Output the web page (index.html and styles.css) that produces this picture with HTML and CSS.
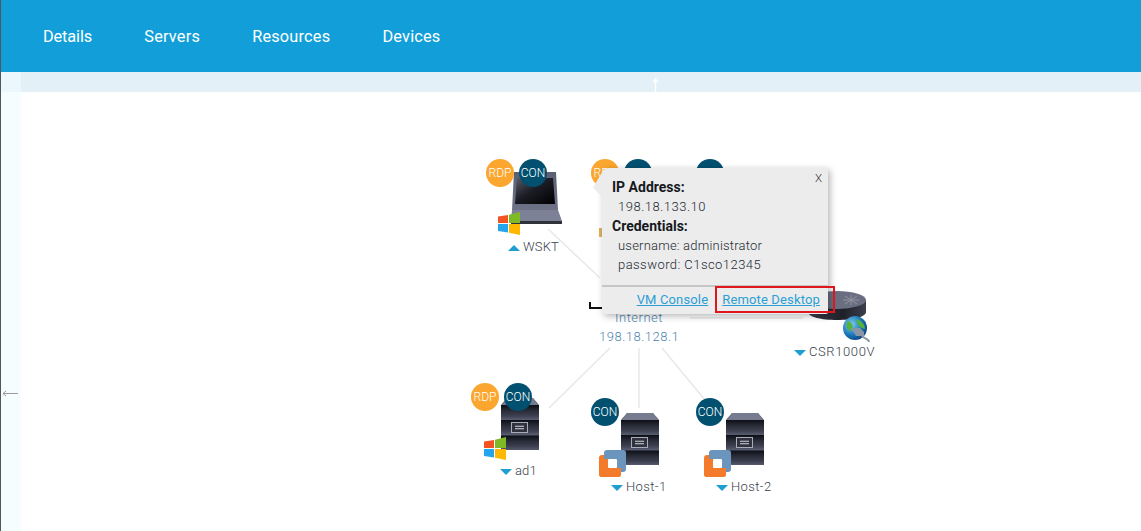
FILE: index.html
```html
<!DOCTYPE html>
<html lang="en">
<head>
<meta charset="utf-8">
<title>Topology</title>
<link rel="stylesheet" href="styles.css">
</head>
<body>
<svg class="defs" width="0" height="0" aria-hidden="true">
  <defs>
    <linearGradient id="band" x1="0" y1="0" x2="0" y2="1">
      <stop offset="0" stop-color="#0d0f16"/><stop offset=".4" stop-color="#2a2c38"/><stop offset=".75" stop-color="#3d4050"/><stop offset="1" stop-color="#565a6c"/>
    </linearGradient>
    <linearGradient id="lid" x1="0" y1="0" x2="0" y2="1">
      <stop offset="0" stop-color="#5b5f74"/><stop offset="1" stop-color="#6e7287"/>
    </linearGradient>
    <linearGradient id="screen" x1="0" y1="0" x2="1" y2="1">
      <stop offset="0" stop-color="#5a5c6a"/><stop offset=".45" stop-color="#1c1d25"/><stop offset="1" stop-color="#000"/>
    </linearGradient>
    <linearGradient id="router" x1="0" y1="0" x2="1" y2="0">
      <stop offset="0" stop-color="#3f4250"/><stop offset=".6" stop-color="#1e2029"/><stop offset="1" stop-color="#3c3f4d"/>
    </linearGradient>
    <radialGradient id="globe" cx=".35" cy=".35" r=".75">
      <stop offset="0" stop-color="#7fd0ec"/><stop offset=".6" stop-color="#1875b8"/><stop offset="1" stop-color="#0b3b78"/>
    </radialGradient>
    <symbol id="server" viewBox="0 0 38 52">
      <path d="M6 0H32L38 7V52H0V7Z" fill="#565a6e"/>
      <path d="M6 0H32L37 7H1Z" fill="#777b90"/>
      <rect x="0" y="7" width="38" height="14.500" fill="url(#band)"/>
      <rect x="0" y="22" width="38" height="14.500" fill="url(#band)"/>
      <rect x="0" y="37.500" width="38" height="14.500" fill="url(#band)"/>
      <rect x="10.500" y="24.500" width="16" height="10" fill="#30323d" stroke="#a9acb8" stroke-width="1"/>
      <path d="M14 28.200H23M14 30.800H23" stroke="#d4d6de" stroke-width="1.100"/>
    </symbol>
    <symbol id="windows" viewBox="0 0 22 23">
      <path d="M0 4.500 10 3V11H0Z" fill="#f25322"/>
      <path d="M11 2.800 22 0V11H11Z" fill="#7fba26"/>
      <path d="M0 12H10V20.500L0 19Z" fill="#23a4ef"/>
      <path d="M11 12H22V23L11 20.700Z" fill="#ffb800"/>
    </symbol>
    <symbol id="vmware" viewBox="0 0 27 27">
      <rect x="0" y="5" width="22" height="22" rx="3" fill="#f47b2c"/>
      <rect x="5" y="0" width="22" height="22" rx="3" fill="#6b95bd"/>
      <path d="M0 9H9V18H22V24A3 3 0 0 1 19 27H3A3 3 0 0 1 0 24Z" fill="#f47b2c"/>
      <rect x="9" y="9" width="9" height="9" rx="1" fill="#fff"/>
    </symbol>
  </defs>
</svg>

<div class="app">
  <div class="rail"></div>
  <div class="main">
    <nav class="tabs">
      <a class="tab">Details</a>
      <a class="tab">Servers</a>
      <a class="tab">Resources</a>
      <a class="tab">Devices</a>
    </nav>
    <div class="strip">
      <div class="strip-side"></div>
      <div class="strip-body">
        <svg class="arrow-up" width="7" height="14" viewBox="0 0 7 14"><path d="M3.500 1V14M1 4 3.500 1 6 4" fill="none" stroke="#fff" stroke-width="1.400"/></svg>
      </div>
    </div>
    <div class="content">
      <div class="side">
        <svg class="arrow-left" width="16" height="7" viewBox="0 0 16 7"><path d="M16 3.500H1M4 1 1 3.500 4 6" fill="none" stroke="#9a9a9a" stroke-width="1"/></svg>
      </div>
      <div class="canvas">
        <svg class="links" width="1120" height="439" viewBox="0 0 1120 439">
          <g stroke="#e8e8e8" stroke-width="1.500">
            <line x1="547" y1="137" x2="599" y2="186"/>
            <line x1="609" y1="256" x2="548" y2="316"/>
            <line x1="638" y1="256" x2="638" y2="316"/>
            <line x1="661" y1="256" x2="704" y2="308"/>
            <line x1="689" y1="226" x2="802" y2="226"/>
          </g>
          <path d="M589 210V216H601" fill="none" stroke="#111" stroke-width="2"/>
        </svg>

        <div class="node node-wskt">
          <svg class="device-laptop" width="52" height="53" viewBox="0 0 52 53">
            <path d="M3 0H45L47 38H1Z" fill="url(#lid)"/>
            <path d="M6 6H42L44 32H4Z" fill="url(#screen)"/>
            <path d="M1 38H47L51 49H0Z" fill="#7d8196"/>
            <path d="M0 49H51V52H0Z" fill="#2f313b"/>
          </svg>
          <svg class="os os-win" width="22" height="23"><use href="#windows"/></svg>
          <span class="badge rdp badge-a">RDP</span>
          <span class="badge con badge-b">CON</span>
          <div class="label"><i class="tri up"></i>WSKT</div>
        </div>

        <div class="node node-mid">
          <span class="badge rdp badge-a">RDP</span>
          <span class="badge con badge-b">CON</span>
          <span class="dot"></span>
        </div>

        <div class="node node-third">
          <span class="badge con badge-c">CON</span>
        </div>

        <div class="node node-csr">
          <svg class="device-router" width="66" height="60" viewBox="0 0 66 60">
            <path d="M3 13V25C3 30 16 33 32 33S61 30 61 25V13Z" fill="url(#router)"/>
            <ellipse cx="32" cy="13" rx="29" ry="9" fill="#6a6e81"/>
            <path d="M38 13H54M46 8V18M40 9 52 17M52 9 40 17" stroke="#90939f" stroke-width="1"/>
            <circle cx="50" cy="41" r="12" fill="url(#globe)"/>
            <path d="M43 34C48 36 49 40 46 44 42 43 40 38 43 34ZM52 32C57 34 60 38 60 42 55 41 51 37 52 32Z" fill="#55b23f"/>
            <path d="M46 41H55L59 45V49H51Z" fill="#8a96a6"/>
            <path d="M57 49C60 52 64 52 64 55" fill="none" stroke="#8d95a2" stroke-width="2"/>
          </svg>
          <div class="label"><i class="tri"></i>CSR1000V</div>
        </div>

        <div class="gateway">Internet<br>198.18.128.1</div>

        <div class="node node-ad1">
          <svg class="device-server" width="38" height="52"><use href="#server"/></svg>
          <svg class="os os-win" width="22" height="23"><use href="#windows"/></svg>
          <span class="badge rdp badge-a">RDP</span>
          <span class="badge con badge-b">CON</span>
          <div class="label"><i class="tri"></i>ad1</div>
        </div>

        <div class="node node-host1">
          <svg class="device-server" width="38" height="52"><use href="#server"/></svg>
          <svg class="os os-vm" width="27" height="27"><use href="#vmware"/></svg>
          <span class="badge con badge-c">CON</span>
          <div class="label"><i class="tri"></i>Host-1</div>
        </div>

        <div class="node node-host2">
          <svg class="device-server" width="38" height="52"><use href="#server"/></svg>
          <svg class="os os-vm" width="27" height="27"><use href="#vmware"/></svg>
          <span class="badge con badge-c">CON</span>
          <div class="label"><i class="tri"></i>Host-2</div>
        </div>

        <div class="popup">
          <span class="close">X</span>
          <div class="popup-body">
            <div class="head">IP Address:</div>
            <div class="row wide">198.18.133.10</div>
            <div class="head">Credentials:</div>
            <div class="row">username: administrator</div>
            <div class="row mid">password: C1sco12345</div>
          </div>
          <div class="actions">
            <a class="link">VM Console</a>
            <a class="link boxed">Remote Desktop</a>
          </div>
        </div>
      </div>
    </div>
  </div>
</div>
</body>
</html>
```

FILE: styles.css
```css
* { box-sizing: border-box; }
html, body { margin: 0; height: 100%; overflow: hidden; background: #fff; }
body { font-family: Roboto, "Liberation Sans", sans-serif; font-weight: 300; color: #3f4a55; }
.defs { position: absolute; }
.app { display: flex; height: 531px; }
.rail { width: 1px; background: #50565e; }
.main { flex: 1; display: flex; flex-direction: column; }
.tabs { height: 72px; background: #129fd9; display: flex; align-items: center; gap: 52.200px; padding: 0 0 0 42px; }
.tab { color: #fff; font-size: 16.300px; font-weight: 400; letter-spacing: .2px; }
.tab:first-child { letter-spacing: -.1px; }
.strip { height: 20px; display: flex; }
.strip-side { width: 20px; background: #ebf7fc; }
.strip-body { flex: 1; background: #e3f0f7; display: flex; justify-content: center; padding-left: 148px; padding-top: 6px; }
.arrow-up { display: block; }
.content { flex: 1; display: flex; }
.side { width: 20px; background: #f6fdff; position: relative; }
.arrow-left { position: absolute; left: 1px; top: 298px; }
.canvas { flex: 1; position: relative; }
.links { position: absolute; left: -20px; top: 0; }

.node { position: absolute; }
.node-wskt { left: 465px; top: 67px; width: 80px; height: 100px; }
.node-mid { left: 570px; top: 67px; width: 80px; height: 40px; }
.node-third { left: 675px; top: 67px; width: 40px; height: 40px; }
.node-csr { left: 770px; top: 195px; width: 110px; height: 75px; }
.node-ad1 { left: 450px; top: 291px; width: 80px; height: 100px; }
.node-host1 { left: 570px; top: 306px; width: 90px; height: 90px; }
.node-host2 { left: 675px; top: 306px; width: 90px; height: 90px; }

.badge { position: absolute; width: 28px; height: 28px; border-radius: 50%; color: #fff; font-size: 12px; font-weight: 300; display: flex; align-items: center; justify-content: center; }
.rdp { background: #fba62e; }
.con { background: #02506f; }
.badge-a { left: 0; top: 0; }
.badge-b { left: 33px; top: 0; }
.badge-c { left: 0; top: 0; }

.device-laptop { position: absolute; left: 25px; top: 13px; }
.device-server { position: absolute; }
.node-ad1 .device-server { left: 30px; top: 15px; }
.node-host1 .device-server, .node-host2 .device-server { left: 30px; top: 15px; }
.os { position: absolute; }
.node-wskt .os-win { left: 12px; top: 53px; }
.node-ad1 .os-win { left: 13px; top: 54px; }
.os-vm { left: 8px; top: 52px; }
.device-router { position: absolute; left: 14px; top: 0; }
.dot { position: absolute; left: 8px; top: 69px; width: 3px; height: 9px; background: #e0b060; }

.label { position: absolute; font-size: 13px; letter-spacing: .15px; white-space: nowrap; color: #39424c; display: flex; align-items: center; }
.tri { width: 0; height: 0; border-left: 6px solid transparent; border-right: 6px solid transparent; border-top: 6px solid #1f9fd0; margin-right: 3px; margin-top: 3px; }
.tri.up { border-top: 0; border-bottom: 6px solid #1f9fd0; }
.node-wskt .label { left: 22px; top: 80px; }
.node-csr .label { left: 3px; top: 57px; letter-spacing: .6px; }
.node-ad1 .label { left: 29px; top: 80px; }
.node-host1 .label { left: 20px; top: 81px; letter-spacing: .4px; }
.node-host2 .label { left: 20px; top: 81px; letter-spacing: .4px; }

.gateway { position: absolute; left: 578px; top: 216px; width: 80px; text-align: center; font-size: 13px; line-height: 19px; letter-spacing: .5px; color: #4d86b0; white-space: nowrap; }

.popup { position: absolute; left: 581px; top: 76px; width: 226px; height: 146px; background: #ececec; box-shadow: 2px 2px 7px rgba(0,0,0,.3); border-radius: 6px 2px 2px 2px; display: flex; flex-direction: column; }
.popup::before { content: ""; position: absolute; left: -9px; top: 1px; width: 11px; height: 28px; background: #ececec; clip-path: polygon(100% 0, 0 66%, 82% 100%); }
.close { position: absolute; right: 6px; top: 3px; font-size: 11.500px; color: #333; }
.popup-body { flex: 1; padding: 9px 10px 0; font-size: 13px; color: #222b33; }
.head { font-weight: 700; font-size: 14px; color: #15191e; padding-top: 1px; line-height: 18.500px; }
.row { padding-left: 6px; line-height: 19.500px; letter-spacing: .2px; }
.row.wide { letter-spacing: .5px; }
.row.mid { letter-spacing: .45px; }
.actions { height: 29px; border-top: 2px solid #c6c6c6; display: flex; justify-content: flex-end; gap: 14px; padding: 5px 8px 0 0; font-size: 13px; }
.link { color: #2a9fd6; text-decoration: underline; letter-spacing: .15px; font-weight: 400; }
.boxed { display: block; height: 15px; position: relative; }
.boxed::after { content: ""; position: absolute; left: -7px; right: -15px; top: -6px; bottom: -6px; border: 2px solid #e0161f; }
```
